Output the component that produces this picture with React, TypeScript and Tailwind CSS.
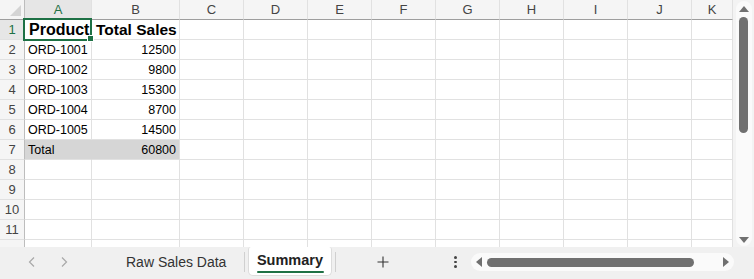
import { Fragment } from 'react';

const columns = ['A', 'B', 'C', 'D', 'E', 'F', 'G', 'H', 'I', 'J', 'K'];

const rows: { a: string; b: string; total?: boolean }[] = [
  { a: 'ORD-1001', b: '12500' },
  { a: 'ORD-1002', b: '9800' },
  { a: 'ORD-1003', b: '15300' },
  { a: 'ORD-1004', b: '8700' },
  { a: 'ORD-1005', b: '14500' },
  { a: 'Total', b: '60800', total: true },
];

const cell = 'border-r border-b border-[#e1e1e1] overflow-visible whitespace-nowrap';
const rowHead =
  'border-r border-b border-r-[#bdbdbd] border-b-[#e1e1e1] bg-[#f5f5f5] flex items-center justify-center text-[13px] text-[#444]';

function EmptyCells({ from }: { from: number }) {
  return (
    <>
      {columns.slice(from).map((c) => (
        <div key={c} className={cell} />
      ))}
    </>
  );
}

function App() {
  const emptyRows = [8, 9, 10, 11];

  return (
    <div className="w-[754px] h-[279px] bg-white flex flex-col overflow-hidden font-['Liberation_Sans',Arial,sans-serif]">
      {/* Sheet area */}
      <div className="flex h-[247px]">
        <div className="w-[733px] overflow-hidden">
          <div className="grid grid-cols-[25px_67px_88px_repeat(8,64px)_41px] auto-rows-[20px]">
            {/* Column headers */}
            <div className="relative bg-[#f5f5f5] border-r border-b border-r-[#bdbdbd] border-b-[#9e9e9e]">
              <div className="absolute right-[3px] bottom-[3px] w-0 h-0 border-l-[11px] border-l-transparent border-b-[11px] border-b-[#d4d4d4]" />
            </div>
            {columns.map((c, i) => (
              <div
                key={c}
                className={`flex items-center justify-center border-r border-b border-r-[#e1e1e1] border-b-[#9e9e9e] text-[13px] ${
                  i === 0 ? 'bg-[#e6e6e6] text-[#1e7145]' : 'bg-[#f5f5f5] text-[#444]'
                }`}
              >
                {c}
              </div>
            ))}

            {/* Row 1 */}
            <div className="border-r border-b border-r-[#bdbdbd] border-b-[#e1e1e1] bg-[#e6e6e6] flex items-center justify-center text-[13px] text-[#1e7145]">
              1
            </div>
            <div className={`${cell} relative flex items-center pl-[4px] pt-[1px] text-[16px] font-bold text-black`}>
              Product
              <div className="absolute -left-[2px] -top-[2px] w-[69px] h-[23px] border-2 border-[#1e7145]" />
              <div className="absolute -right-[3px] -bottom-[3px] w-[5px] h-[5px] bg-[#1e7145] border border-white box-content" />
            </div>
            <div className={`${cell} flex items-center pl-[4px] pt-[1px] text-[15.5px] font-bold text-black`}>Total Sales</div>
            <EmptyCells from={2} />

            {/* Data rows */}
            {rows.map((r, i) => (
              <Fragment key={r.a}>
                <div className={rowHead}>{i + 2}</div>
                <div className={`${cell} flex items-center pl-[3px] pt-[1px] text-[12.5px] text-black ${r.total ? 'bg-[#d6d6d6] border-r-[#d6d6d6]' : ''}`}>
                  {r.a}
                </div>
                <div className={`${cell} flex items-center justify-end pr-[3px] pt-[1px] text-[12.5px] text-black ${r.total ? 'bg-[#d6d6d6]' : ''}`}>
                  {r.b}
                </div>
                <EmptyCells from={2} />
              </Fragment>
            ))}

            {/* Empty rows */}
            {emptyRows.map((n) => (
              <Fragment key={n}>
                <div className={rowHead}>{n}</div>
                <EmptyCells from={0} />
              </Fragment>
            ))}
            <div className={rowHead} />
            <EmptyCells from={0} />
          </div>
        </div>

        {/* Vertical scrollbar */}
        <div className="w-[21px] bg-[#f3f3f3] flex justify-center pt-[1px]">
          <div className="w-[16px] h-[245px] bg-[#fafafa] rounded-full flex flex-col items-center">
            <div className="mt-[5px] w-0 h-0 border-l-[5px] border-r-[5px] border-b-[6px] border-l-transparent border-r-transparent border-b-[#707070]" />
            <div className="mt-[5px] w-[9px] h-[116px] bg-[#707070] rounded-full" />
            <div className="flex-1" />
            <div className="mb-[3px] w-0 h-0 border-l-[5px] border-r-[5px] border-t-[6px] border-l-transparent border-r-transparent border-t-[#707070]" />
          </div>
        </div>
      </div>

      {/* Tab bar */}
      <div className="flex-1 bg-[#f0f0f0] flex items-start">
        <div className="flex items-center h-[30px] pl-[26px] gap-[20px] text-[#a8a8a8]">
          <svg width="12" height="12" viewBox="0 0 12 12" fill="none" stroke="currentColor" strokeWidth="1.2">
            <path d="M8 1.5 L3.5 6 L8 10.5" />
          </svg>
          <svg width="12" height="12" viewBox="0 0 12 12" fill="none" stroke="currentColor" strokeWidth="1.2">
            <path d="M4 1.5 L8.5 6 L4 10.5" />
          </svg>
        </div>

        <div className="ml-[56px] w-[100px] h-[30px] flex items-center text-[14px] text-[#333] whitespace-nowrap">Raw Sales Data</div>

        <div className="ml-[18px] mt-[5px] h-[20px] w-px bg-[#d0d0d0]" />
        <div className="ml-[3px] h-[29px] w-[84px] bg-white border border-t-0 border-[#dcdcdc] rounded-[5px] rounded-t-[3px] flex flex-col items-center pt-[5px]">
          <span className="text-[14.5px] font-bold text-[#222] leading-[16px]">Summary</span>
          <div className="mt-[3px] w-[67px] h-[2px] bg-[#1e7145] rounded-full" />
        </div>
        <div className="ml-[3px] mt-[5px] h-[20px] w-px bg-[#d0d0d0]" />

        <div className="ml-[41px] h-[30px] flex items-center text-[#333]">
          <svg width="12" height="12" viewBox="0 0 12 12" fill="none" stroke="currentColor" strokeWidth="1.1">
            <path d="M6 0.5 V11.5 M0.5 6 H11.5" />
          </svg>
        </div>

        <div className="ml-[65px] w-[3px] h-[30px] flex flex-col items-center justify-center gap-[2px]">
          <span className="w-[2.5px] h-[2.5px] bg-[#444] rounded-full" />
          <span className="w-[2.5px] h-[2.5px] bg-[#444] rounded-full" />
          <span className="w-[2.5px] h-[2.5px] bg-[#444] rounded-full" />
        </div>

        {/* Horizontal scrollbar */}
        <div className="ml-[14px] mt-[6px] w-[263px] h-[18px] bg-[#fafafa] rounded-full flex items-center px-[5px]">
          <div className="w-0 h-0 border-t-[5px] border-b-[5px] border-r-[6px] border-t-transparent border-b-transparent border-r-[#707070]" />
          <div className="ml-[5px] w-[207px] h-[9px] bg-[#707070] rounded-full" />
          <div className="flex-1" />
          <div className="w-0 h-0 border-t-[5px] border-b-[5px] border-l-[6px] border-t-transparent border-b-transparent border-l-[#707070]" />
        </div>
      </div>
    </div>
  );
}

export default App;
